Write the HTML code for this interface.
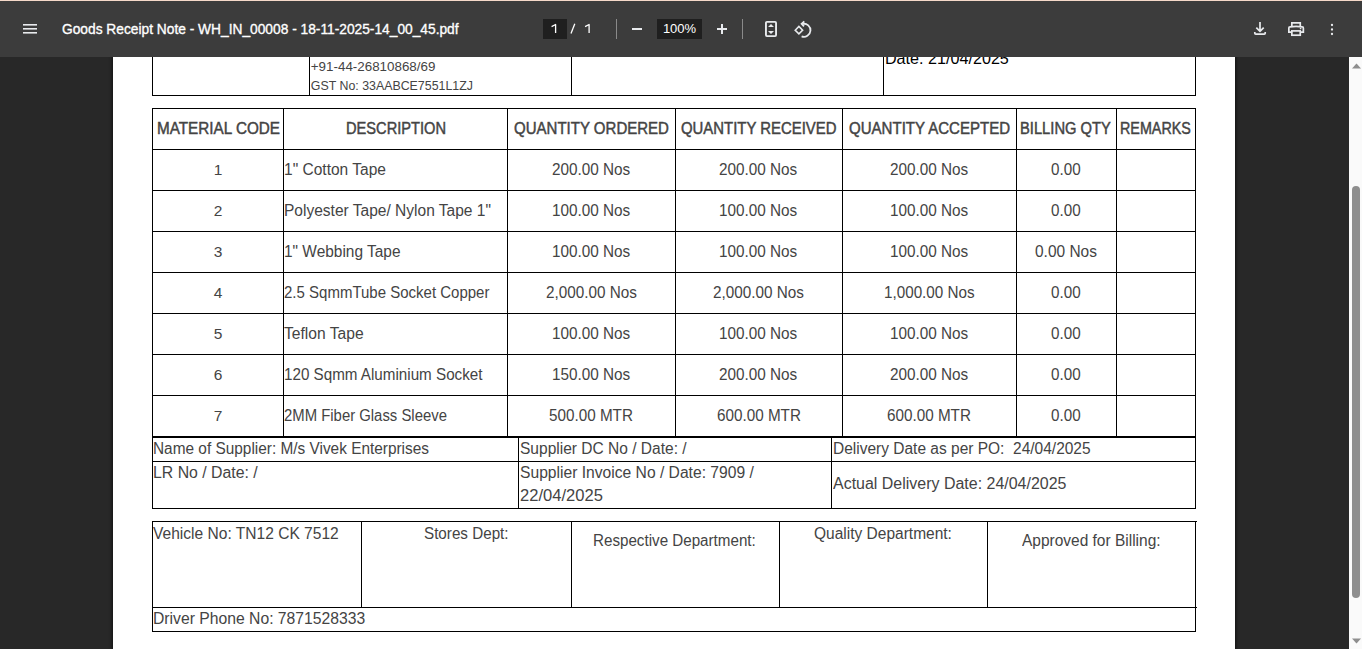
<!DOCTYPE html>
<html><head><meta charset="utf-8"><style>
html,body{margin:0;padding:0;width:1362px;height:649px;overflow:hidden;background:#282828;font-family:"Liberation Sans",sans-serif;}
#bg{position:absolute;left:0;top:0;width:1349px;height:649px;background:#282828}
#page{position:absolute;left:113px;top:0;width:1122px;height:649px;background:#fff;box-shadow:0 0 3px 1px rgba(0,0,0,0.6)}
.t{position:absolute;white-space:nowrap;}
.l{position:absolute;background:#000}
#tb{position:absolute;left:0;top:0;width:1362px;height:57px;background:#3c3c3c}
#title{position:absolute;left:62px;top:19px;font-size:15px;line-height:20px;color:#fff;white-space:nowrap;transform-origin:0 0;transform:scaleX(0.917);-webkit-text-stroke:0.35px #fff}
.box{position:absolute;top:19px;height:20px;background:#1f1f1f;color:#fff;font-size:13px;line-height:20px;text-align:center}
.tt{position:absolute;top:19px;line-height:20px;font-size:13px;color:#fff}
.sep{position:absolute;top:19px;width:1px;height:20px;background:#8a8a8a}
.l2{position:absolute;background:#e8eaed}
.ic{position:absolute}
#sb{position:absolute;left:1349px;top:57px;width:13px;height:592px;background:#fafafa}
#thumb{position:absolute;left:3px;top:129px;width:8px;height:412px;border-radius:4px;background:#8e8e8e}
</style></head><body>
<div id="bg"></div>
<div id="page">
<div style="position:absolute;left:-113px;top:0;width:1362px;height:649px">
<div class="l" style="left:152px;top:56px;width:1px;height:40px"></div>
<div class="l" style="left:309px;top:56px;width:1px;height:40px"></div>
<div class="l" style="left:571px;top:56px;width:1px;height:40px"></div>
<div class="l" style="left:883px;top:56px;width:1px;height:40px"></div>
<div class="l" style="left:1195px;top:56px;width:1px;height:40px"></div>
<div class="l" style="left:152px;top:95px;width:1044px;height:1px"></div>
<div class="t" style="top:57.86px;font-size:13.39px;line-height:17px;color:#444;left:310.8px;">+91-44-26810868/69</div>
<div class="t" style="top:77.70px;font-size:12.39px;line-height:16px;color:#444;left:310.8px;">GST No: 33AABCE7551L1ZJ</div>
<div class="t" style="top:47.89px;font-size:16.17px;line-height:21px;color:#000;left:884.9px;">Date: 21/04/2025</div>
<div class="l" style="left:152px;top:108px;width:1044px;height:1px"></div>
<div class="l" style="left:152px;top:149px;width:1044px;height:1px"></div>
<div class="l" style="left:152px;top:190px;width:1044px;height:1px"></div>
<div class="l" style="left:152px;top:231px;width:1044px;height:1px"></div>
<div class="l" style="left:152px;top:272px;width:1044px;height:1px"></div>
<div class="l" style="left:152px;top:313px;width:1044px;height:1px"></div>
<div class="l" style="left:152px;top:354px;width:1044px;height:1px"></div>
<div class="l" style="left:152px;top:395px;width:1044px;height:1px"></div>
<div class="l" style="left:152px;top:436px;width:1044px;height:1px"></div>
<div class="l" style="left:152px;top:437px;width:1044px;height:1px"></div>
<div class="l" style="left:152px;top:108px;width:1px;height:329px"></div>
<div class="l" style="left:283px;top:108px;width:1px;height:329px"></div>
<div class="l" style="left:507px;top:108px;width:1px;height:329px"></div>
<div class="l" style="left:675px;top:108px;width:1px;height:329px"></div>
<div class="l" style="left:842px;top:108px;width:1px;height:329px"></div>
<div class="l" style="left:1016px;top:108px;width:1px;height:329px"></div>
<div class="l" style="left:1116px;top:108px;width:1px;height:329px"></div>
<div class="l" style="left:1195px;top:108px;width:1px;height:329px"></div>
<div class="t" style="top:118.58px;font-size:15.63px;line-height:20px;color:#444;left:157.0px;-webkit-text-stroke:0.45px #444;transform:scaleX(0.9770);transform-origin:0 0;">MATERIAL CODE</div>
<div class="t" style="top:118.58px;font-size:15.63px;line-height:20px;color:#444;left:345.6px;-webkit-text-stroke:0.45px #444;transform:scaleX(0.9361);transform-origin:0 0;">DESCRIPTION</div>
<div class="t" style="top:118.58px;font-size:15.63px;line-height:20px;color:#444;left:514.0px;-webkit-text-stroke:0.45px #444;transform:scaleX(0.9614);transform-origin:0 0;">QUANTITY ORDERED</div>
<div class="t" style="top:118.58px;font-size:15.63px;line-height:20px;color:#444;left:680.6px;-webkit-text-stroke:0.45px #444;transform:scaleX(0.9545);transform-origin:0 0;">QUANTITY RECEIVED</div>
<div class="t" style="top:118.58px;font-size:15.63px;line-height:20px;color:#444;left:848.5px;-webkit-text-stroke:0.45px #444;transform:scaleX(0.9628);transform-origin:0 0;">QUANTITY ACCEPTED</div>
<div class="t" style="top:118.58px;font-size:15.63px;line-height:20px;color:#444;left:1020.4px;-webkit-text-stroke:0.45px #444;transform:scaleX(0.9426);transform-origin:0 0;">BILLING QTY</div>
<div class="t" style="top:118.58px;font-size:15.63px;line-height:20px;color:#444;left:1120.3px;-webkit-text-stroke:0.45px #444;transform:scaleX(0.9173);transform-origin:0 0;">REMARKS</div>
<div class="t" style="top:159.63px;font-size:15.5px;line-height:20px;color:#444;left:-82px;width:600px;text-align:center;">1</div>
<div class="t" style="top:159.58px;font-size:15.63px;line-height:20px;color:#444;left:283.8px;transform:scaleX(0.9940);transform-origin:0 0;">1" Cotton Tape</div>
<div class="t" style="top:159.58px;font-size:15.63px;line-height:20px;color:#444;left:552.15px;transform:scaleX(0.9794);transform-origin:0 0;">200.00 Nos</div>
<div class="t" style="top:159.58px;font-size:15.63px;line-height:20px;color:#444;left:719.35px;transform:scaleX(0.9794);transform-origin:0 0;">200.00 Nos</div>
<div class="t" style="top:159.58px;font-size:15.63px;line-height:20px;color:#444;left:890.25px;transform:scaleX(0.9794);transform-origin:0 0;">200.00 Nos</div>
<div class="t" style="top:159.58px;font-size:15.63px;line-height:20px;color:#444;left:1051.2px;transform:scaleX(0.9737);transform-origin:0 0;">0.00</div>
<div class="t" style="top:200.63px;font-size:15.5px;line-height:20px;color:#444;left:-82px;width:600px;text-align:center;">2</div>
<div class="t" style="top:200.58px;font-size:15.63px;line-height:20px;color:#444;left:283.8px;transform:scaleX(0.9939);transform-origin:0 0;">Polyester Tape/ Nylon Tape 1"</div>
<div class="t" style="top:200.58px;font-size:15.63px;line-height:20px;color:#444;left:552.15px;transform:scaleX(0.9794);transform-origin:0 0;">100.00 Nos</div>
<div class="t" style="top:200.58px;font-size:15.63px;line-height:20px;color:#444;left:719.35px;transform:scaleX(0.9794);transform-origin:0 0;">100.00 Nos</div>
<div class="t" style="top:200.58px;font-size:15.63px;line-height:20px;color:#444;left:890.25px;transform:scaleX(0.9794);transform-origin:0 0;">100.00 Nos</div>
<div class="t" style="top:200.58px;font-size:15.63px;line-height:20px;color:#444;left:1051.2px;transform:scaleX(0.9737);transform-origin:0 0;">0.00</div>
<div class="t" style="top:241.63px;font-size:15.5px;line-height:20px;color:#444;left:-82px;width:600px;text-align:center;">3</div>
<div class="t" style="top:241.58px;font-size:15.63px;line-height:20px;color:#444;left:283.8px;transform:scaleX(0.9879);transform-origin:0 0;">1" Webbing Tape</div>
<div class="t" style="top:241.58px;font-size:15.63px;line-height:20px;color:#444;left:552.15px;transform:scaleX(0.9794);transform-origin:0 0;">100.00 Nos</div>
<div class="t" style="top:241.58px;font-size:15.63px;line-height:20px;color:#444;left:719.35px;transform:scaleX(0.9794);transform-origin:0 0;">100.00 Nos</div>
<div class="t" style="top:241.58px;font-size:15.63px;line-height:20px;color:#444;left:890.25px;transform:scaleX(0.9794);transform-origin:0 0;">100.00 Nos</div>
<div class="t" style="top:241.58px;font-size:15.63px;line-height:20px;color:#444;left:1035.0px;transform:scaleX(0.9904);transform-origin:0 0;">0.00 Nos</div>
<div class="t" style="top:282.63px;font-size:15.5px;line-height:20px;color:#444;left:-82px;width:600px;text-align:center;">4</div>
<div class="t" style="top:282.58px;font-size:15.63px;line-height:20px;color:#444;left:283.8px;transform:scaleX(0.9604);transform-origin:0 0;">2.5 SqmmTube Socket Copper</div>
<div class="t" style="top:282.58px;font-size:15.63px;line-height:20px;color:#444;left:545.8px;transform:scaleX(0.9785);transform-origin:0 0;">2,000.00 Nos</div>
<div class="t" style="top:282.58px;font-size:15.63px;line-height:20px;color:#444;left:713.0px;transform:scaleX(0.9785);transform-origin:0 0;">2,000.00 Nos</div>
<div class="t" style="top:282.58px;font-size:15.63px;line-height:20px;color:#444;left:884.1px;transform:scaleX(0.9742);transform-origin:0 0;">1,000.00 Nos</div>
<div class="t" style="top:282.58px;font-size:15.63px;line-height:20px;color:#444;left:1051.2px;transform:scaleX(0.9737);transform-origin:0 0;">0.00</div>
<div class="t" style="top:323.63px;font-size:15.5px;line-height:20px;color:#444;left:-82px;width:600px;text-align:center;">5</div>
<div class="t" style="top:323.58px;font-size:15.63px;line-height:20px;color:#444;left:283.8px;transform:scaleX(1.0008);transform-origin:0 0;">Teflon Tape</div>
<div class="t" style="top:323.58px;font-size:15.63px;line-height:20px;color:#444;left:552.15px;transform:scaleX(0.9794);transform-origin:0 0;">100.00 Nos</div>
<div class="t" style="top:323.58px;font-size:15.63px;line-height:20px;color:#444;left:719.35px;transform:scaleX(0.9794);transform-origin:0 0;">100.00 Nos</div>
<div class="t" style="top:323.58px;font-size:15.63px;line-height:20px;color:#444;left:890.25px;transform:scaleX(0.9794);transform-origin:0 0;">100.00 Nos</div>
<div class="t" style="top:323.58px;font-size:15.63px;line-height:20px;color:#444;left:1051.2px;transform:scaleX(0.9737);transform-origin:0 0;">0.00</div>
<div class="t" style="top:364.63px;font-size:15.5px;line-height:20px;color:#444;left:-82px;width:600px;text-align:center;">6</div>
<div class="t" style="top:364.58px;font-size:15.63px;line-height:20px;color:#444;left:283.8px;transform:scaleX(0.9724);transform-origin:0 0;">120 Sqmm Aluminium Socket</div>
<div class="t" style="top:364.58px;font-size:15.63px;line-height:20px;color:#444;left:552.15px;transform:scaleX(0.9794);transform-origin:0 0;">150.00 Nos</div>
<div class="t" style="top:364.58px;font-size:15.63px;line-height:20px;color:#444;left:719.35px;transform:scaleX(0.9794);transform-origin:0 0;">200.00 Nos</div>
<div class="t" style="top:364.58px;font-size:15.63px;line-height:20px;color:#444;left:890.25px;transform:scaleX(0.9794);transform-origin:0 0;">200.00 Nos</div>
<div class="t" style="top:364.58px;font-size:15.63px;line-height:20px;color:#444;left:1051.2px;transform:scaleX(0.9737);transform-origin:0 0;">0.00</div>
<div class="t" style="top:405.63px;font-size:15.5px;line-height:20px;color:#444;left:-82px;width:600px;text-align:center;">7</div>
<div class="t" style="top:405.58px;font-size:15.63px;line-height:20px;color:#444;left:283.8px;transform:scaleX(0.9524);transform-origin:0 0;">2MM Fiber Glass Sleeve</div>
<div class="t" style="top:405.58px;font-size:15.63px;line-height:20px;color:#444;left:549.3px;transform:scaleX(0.9763);transform-origin:0 0;">500.00 MTR</div>
<div class="t" style="top:405.58px;font-size:15.63px;line-height:20px;color:#444;left:716.5px;transform:scaleX(0.9763);transform-origin:0 0;">600.00 MTR</div>
<div class="t" style="top:405.58px;font-size:15.63px;line-height:20px;color:#444;left:887.4px;transform:scaleX(0.9763);transform-origin:0 0;">600.00 MTR</div>
<div class="t" style="top:405.58px;font-size:15.63px;line-height:20px;color:#444;left:1051.2px;transform:scaleX(0.9737);transform-origin:0 0;">0.00</div>
<div class="l" style="left:152px;top:461px;width:1044px;height:1px"></div>
<div class="l" style="left:152px;top:508px;width:1044px;height:1px"></div>
<div class="l" style="left:152px;top:437px;width:1px;height:72px"></div>
<div class="l" style="left:518px;top:437px;width:1px;height:72px"></div>
<div class="l" style="left:831px;top:437px;width:1px;height:72px"></div>
<div class="l" style="left:1195px;top:437px;width:1px;height:72px"></div>
<div class="t" style="top:438.58px;font-size:15.63px;line-height:20px;color:#444;left:153.0px;transform:scaleX(0.9849);transform-origin:0 0;">Name of Supplier: M/s Vivek Enterprises</div>
<div class="t" style="top:462.58px;font-size:15.63px;line-height:20px;color:#444;left:153.0px;transform:scaleX(1.0136);transform-origin:0 0;">LR No / Date: /</div>
<div class="t" style="top:438.58px;font-size:15.63px;line-height:20px;color:#444;left:519.5px;transform:scaleX(0.9940);transform-origin:0 0;">Supplier DC No / Date: /</div>
<div class="t" style="top:462.58px;font-size:15.63px;line-height:20px;color:#444;left:519.5px;transform:scaleX(1.0007);transform-origin:0 0;">Supplier Invoice No / Date: 7909 /</div>
<div class="t" style="top:485.58px;font-size:15.63px;line-height:20px;color:#444;left:519.5px;transform:scaleX(1.0610);transform-origin:0 0;">22/04/2025</div>
<div class="t" style="top:438.58px;font-size:15.63px;line-height:20px;color:#444;left:832.7px;white-space:pre;transform:scaleX(0.9920);transform-origin:0 0;">Delivery Date as per PO:  24/04/2025</div>
<div class="t" style="top:473.58px;font-size:15.63px;line-height:20px;color:#444;left:832.7px;transform:scaleX(1.0218);transform-origin:0 0;">Actual Delivery Date: 24/04/2025</div>
<div class="l" style="left:152px;top:521px;width:1045px;height:1px"></div>
<div class="l" style="left:152px;top:607px;width:1045px;height:1px"></div>
<div class="l" style="left:152px;top:631px;width:1044px;height:1px"></div>
<div class="l" style="left:152px;top:521px;width:1px;height:111px"></div>
<div class="l" style="left:1195px;top:521px;width:1px;height:111px"></div>
<div class="l" style="left:361px;top:521px;width:1px;height:87px"></div>
<div class="l" style="left:571px;top:521px;width:1px;height:87px"></div>
<div class="l" style="left:779px;top:521px;width:1px;height:87px"></div>
<div class="l" style="left:987px;top:521px;width:1px;height:87px"></div>
<div class="t" style="top:523.58px;font-size:15.63px;line-height:20px;color:#444;left:153.0px;transform:scaleX(0.9960);transform-origin:0 0;">Vehicle No: TN12 CK 7512</div>
<div class="t" style="top:523.58px;font-size:15.63px;line-height:20px;color:#444;left:424.1px;transform:scaleX(0.9735);transform-origin:0 0;">Stores Dept:</div>
<div class="t" style="top:530.58px;font-size:15.63px;line-height:20px;color:#444;left:593.2px;transform:scaleX(0.9712);transform-origin:0 0;">Respective Department:</div>
<div class="t" style="top:523.58px;font-size:15.63px;line-height:20px;color:#444;left:814.1px;transform:scaleX(0.9926);transform-origin:0 0;">Quality Department:</div>
<div class="t" style="top:530.58px;font-size:15.63px;line-height:20px;color:#444;left:1022.0px;transform:scaleX(0.9908);transform-origin:0 0;">Approved for Billing:</div>
<div class="t" style="top:608.58px;font-size:15.63px;line-height:20px;color:#444;left:153.0px;transform:scaleX(1.0054);transform-origin:0 0;">Driver Phone No: 7871528333</div>
</div>
</div>

<div id="tb">
  <div style="position:absolute;left:0;top:0;width:1362px;height:1px;background:#f5d9c9"></div>
  <svg class="ic" style="left:23px;top:23px" width="14" height="12" viewBox="0 0 14 12"><rect x="0" y="1" width="14" height="1.6" fill="#e8eaed"/><rect x="0" y="5" width="14" height="1.6" fill="#e8eaed"/><rect x="0" y="9" width="14" height="1.6" fill="#e8eaed"/></svg>
  <div id="title">Goods Receipt Note - WH_IN_00008 - 18-11-2025-14_00_45.pdf</div>
  <div class="box" style="left:543px;width:24px"></div><svg class="ic" style="left:550px;top:23px" width="8" height="11" viewBox="0 0 8 11"><path d="M1.6 3.6 L5.6 1.5 V10.1" fill="none" stroke="#fff" stroke-width="1.3" stroke-linejoin="round"/></svg>
  <svg class="ic" style="left:569px;top:23px" width="8" height="11" viewBox="0 0 8 11"><path d="M5.8 0.8 L2 10.4" fill="none" stroke="#fff" stroke-width="1.3"/></svg>
  <svg class="ic" style="left:584px;top:23px" width="8" height="11" viewBox="0 0 8 11"><path d="M1.1 3.6 L5.1 1.5 V10.1" fill="none" stroke="#fff" stroke-width="1.3" stroke-linejoin="round"/></svg>
  <div class="sep" style="left:616px"></div>
  <div class="l2" style="left:632px;top:28px;width:10px;height:2px"></div>
  <div class="box" style="left:657px;width:45px">100%</div>
  <div class="l2" style="left:717px;top:28px;width:10px;height:1.8px"></div>
  <div class="l2" style="left:721.1px;top:24px;width:1.8px;height:10px"></div>
  <div class="sep" style="left:742px"></div>
  <svg class="ic" style="left:764px;top:20px" width="14" height="18" viewBox="0 0 14 18"><rect x="1.95" y="1.9" width="10.1" height="14.2" rx="1" fill="none" stroke="#e8eaed" stroke-width="1.9"/><path d="M4 7 L7 4 L10 7Z M4 11 L7 14 L10 11Z" fill="#e8eaed"/></svg>
  <svg class="ic" style="left:793px;top:20px" width="20" height="19" viewBox="0 0 20 19"><path d="M2.2 10.2 L5.9 6.5 L9.6 10.2 L5.9 13.9Z" fill="none" stroke="#e8eaed" stroke-width="1.6"/><path d="M9.6 3.9 A6.5 6.5 0 1 1 8.6 16.3" fill="none" stroke="#e8eaed" stroke-width="1.8"/><path d="M11.3 1.3 L8.6 3.8 L11 6.3" fill="none" stroke="#e8eaed" stroke-width="1.8"/></svg>
  <svg class="ic" style="left:1253px;top:21px" width="14" height="15" viewBox="0 0 14 15"><path d="M7 0.9 V10 M3.3 6.6 L7 10.3 L10.7 6.6" fill="none" stroke="#e8eaed" stroke-width="1.7"/><path d="M1.8 10.9 V12.3 Q1.8 13.2 2.7 13.2 H11.3 Q12.2 13.2 12.2 12.3 V10.9" fill="none" stroke="#e8eaed" stroke-width="1.7"/></svg>
  <svg class="ic" style="left:1287px;top:21px" width="18" height="16" viewBox="0 0 18 16"><path d="M4.85 5.3 V1.8 H13.25 V5.3" fill="none" stroke="#e8eaed" stroke-width="1.7"/><path d="M4.85 11.1 H1.85 V6.9 Q1.85 5.9 2.85 5.9 Q9 4.9 15.35 5.9 Q16.35 5.9 16.35 6.9 V11.1 H13.25" fill="none" stroke="#e8eaed" stroke-width="1.7"/><rect x="4.85" y="9.9" width="8.4" height="4.3" fill="none" stroke="#e8eaed" stroke-width="1.7"/><circle cx="13.6" cy="7.5" r="0.85" fill="#e8eaed"/></svg>
  <svg class="ic" style="left:1330px;top:21.5px" width="4" height="14" viewBox="0 0 4 14"><circle cx="2" cy="3" r="1.15" fill="#e8eaed"/><circle cx="2" cy="7.5" r="1.15" fill="#e8eaed"/><circle cx="2" cy="12" r="1.15" fill="#e8eaed"/></svg>
</div>

<div id="sb"><div id="thumb"></div>
<svg style="position:absolute;left:2.5px;top:5.5px" width="9" height="6" viewBox="0 0 9 6"><path d="M0 5.5 L4.5 0.5 L9 5.5Z" fill="#8e8e8e"/></svg>
<svg style="position:absolute;left:2.5px;top:581px" width="9" height="6" viewBox="0 0 9 6"><path d="M0 0.5 L4.5 5.5 L9 0.5Z" fill="#8e8e8e"/></svg>
</div>
</body></html>
